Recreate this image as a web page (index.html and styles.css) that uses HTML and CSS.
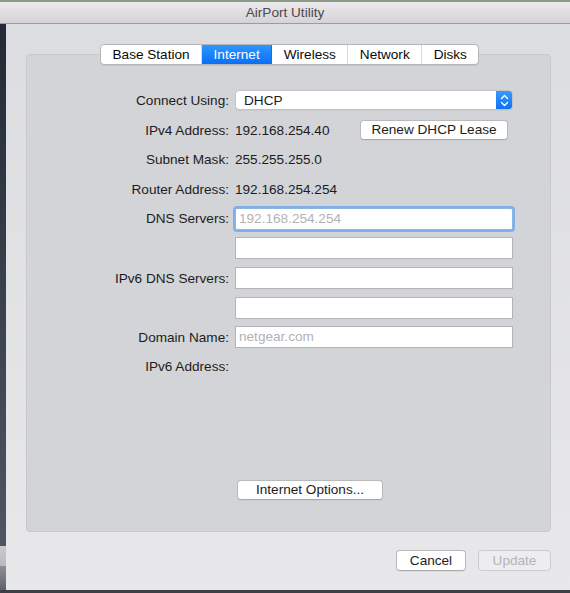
FILE: index.html
```html
<!DOCTYPE html>
<html>
<head>
<meta charset="utf-8">
<link rel="stylesheet" href="styles.css">
</head>
<body>
<div class="topline"></div>
<div class="titlebar">AirPort Utility</div>
<div class="main">
  <div class="sidestrip">
    <div class="strip-dark"></div>
    <div class="strip-light"></div>
    <div class="strip-mid"></div>
  </div>
  <div class="window">
    <div class="tabs">
      <div class="tab">Base Station</div>
      <div class="tab selected">Internet</div>
      <div class="tab">Wireless</div>
      <div class="tab">Network</div>
      <div class="tab last">Disks</div>
    </div>
    <div class="groupbox">
      <div class="form">
        <div class="row">
          <div class="label">Connect Using:</div>
          <div class="select">
            <span class="select-text">DHCP</span>
            <span class="stepper">
              <svg width="9" height="13" viewBox="0 0 9 13"><path d="M1.5 4.5 L4.5 1.5 L7.5 4.5 M1.5 8.5 L4.5 11.5 L7.5 8.5" fill="none" stroke="#fff" stroke-width="1.4" stroke-linecap="round" stroke-linejoin="round"/></svg>
            </span>
          </div>
        </div>
        <div class="row">
          <div class="label">IPv4 Address:</div>
          <div class="value split">
            <span>192.168.254.40</span>
            <div class="button renew">Renew DHCP Lease</div>
          </div>
        </div>
        <div class="row">
          <div class="label">Subnet Mask:</div>
          <div class="value">255.255.255.0</div>
        </div>
        <div class="row">
          <div class="label">Router Address:</div>
          <div class="value">192.168.254.254</div>
        </div>
        <div class="row">
          <div class="label">DNS Servers:</div>
          <div class="input focused"><span class="placeholder">192.168.254.254</span></div>
        </div>
        <div class="row">
          <div class="label"></div>
          <div class="input"></div>
        </div>
        <div class="row">
          <div class="label">IPv6 DNS Servers:</div>
          <div class="input"></div>
        </div>
        <div class="row">
          <div class="label"></div>
          <div class="input"></div>
        </div>
        <div class="row">
          <div class="label">Domain Name:</div>
          <div class="input"><span class="placeholder">netgear.com</span></div>
        </div>
        <div class="row">
          <div class="label">IPv6 Address:</div>
          <div class="value"></div>
        </div>
      </div>
      <div class="button options">Internet Options...</div>
    </div>
    <div class="footer">
      <div class="button cancel">Cancel</div>
      <div class="button update disabled">Update</div>
    </div>
  </div>
</div>
<div class="bottomline"></div>
</body>
</html>
```

FILE: styles.css
```css
* { box-sizing: border-box; }
html, body {
  margin: 0;
  padding: 0;
  width: 570px;
  height: 593px;
  overflow: hidden;
}
body {
  font-family: "Liberation Sans", Arial, sans-serif;
  font-size: 13.6px;
  color: #1c1c1c;
  background: #3a3f48;
  display: flex;
  flex-direction: column;
}
.topline {
  height: 2px;
  background: #8c9a8a;
}
.titlebar {
  height: 22px;
  background: linear-gradient(#ebe9eb, #d5d3d5);
  border-bottom: 1px solid #9c9c9e;
  text-align: center;
  font-size: 13.6px;
  line-height: 21px;
  color: #4a4a4a;
}
.main {
  display: flex;
  height: 566px;
}
.sidestrip {
  width: 6px;
  display: flex;
  flex-direction: column;
}
.strip-dark {
  height: 522px;
  background: linear-gradient(#232a35, #4e5661);
}
.strip-light {
  height: 20px;
  background: linear-gradient(#c9cacd, #b9babd);
}
.strip-mid {
  flex: 1;
  background: linear-gradient(#8e9095, #5d616a);
}
.window {
  flex: 1;
  background: linear-gradient(#dcdde0, #e8e8ea);
  padding: 20px 19px 0 20px;
  display: flex;
  flex-direction: column;
}
.tabs {
  position: relative;
  z-index: 1;
  align-self: flex-start;
  margin-left: 74px;
  display: flex;
  height: 21px;
  background: #fff;
  border: 1px solid #b5b5b7;
  border-radius: 4px;
  box-shadow: 0 1px 0 rgba(0,0,0,0.06);
  font-size: 13.6px;
  color: #0a0a0a;
}
.tab {
  padding: 0 11.5px;
  line-height: 19px;
  border-right: 1px solid #d9d9db;
}
.tab.last { border-right: none; }
.tab.selected {
  background: linear-gradient(#2d96ff, #0b6ff6);
  color: #fff;
  border-right-color: #0b6ff6;
}
.groupbox {
  margin-top: -11px;
  height: 478px;
  background: #d3d4d7;
  border: 1px solid #c8c9cc;
  border-radius: 4px;
  display: flex;
  flex-direction: column;
}
.form {
  padding-top: 30.7px;
  display: flex;
  flex-direction: column;
}
.row {
  height: 29.6px;
  display: flex;
  align-items: center;
  gap: 6px;
}
.label {
  width: 202px;
  text-align: right;
  flex-shrink: 0;
}
.value {
  width: 278px;
}
.value.split {
  display: flex;
  align-items: center;
  justify-content: space-between;
  padding-right: 5px;
}
.select {
  width: 278px;
  height: 20px;
  background: #fff;
  border: 1px solid #c3c3c5;
  border-radius: 4px;
  box-shadow: 0 1px 0 rgba(0,0,0,0.05);
  display: flex;
  align-items: center;
  overflow: hidden;
}
.select-text {
  flex: 1;
  padding-left: 8px;
}
.stepper {
  width: 17px;
  height: 20px;
  margin-right: -1px;
  background: linear-gradient(#3a9cff, #0d6ff5);
  display: flex;
  align-items: center;
  justify-content: center;
}
.button {
  background: #fff;
  border: 1px solid #b9b9bb;
  border-bottom-color: #a9a9ab;
  border-radius: 4px;
  text-align: center;
  height: 20px;
  line-height: 18px;
  box-shadow: 0 1px 0 rgba(0,0,0,0.04);
}
.renew { width: 148px; }
.options {
  width: 146px;
  margin-top: auto;
  margin-bottom: 31px;
  margin-left: 210px;
}
.input {
  width: 278px;
  height: 22px;
  background: #fff;
  border: 1px solid #b4b4b6;
  padding-left: 3px;
  line-height: 20px;
}
.input.focused {
  border-color: #8eb4e3;
  border-radius: 2px;
  box-shadow: 0 0 0 2px #7fb0ea;
}
.placeholder {
  color: #b2b2b4;
}
.footer {
  margin-top: 18px;
  display: flex;
  justify-content: flex-end;
  gap: 12px;
}
.footer .button {
  height: 21px;
  line-height: 19px;
}
.cancel { width: 70px; }
.update { width: 73px; }
.button.disabled {
  background: #ededef;
  border-color: #cbcbcd;
  color: #b4b4b6;
  box-shadow: none;
}
.bottomline {
  flex: 1;
  background: #3a3f48;
}
```
